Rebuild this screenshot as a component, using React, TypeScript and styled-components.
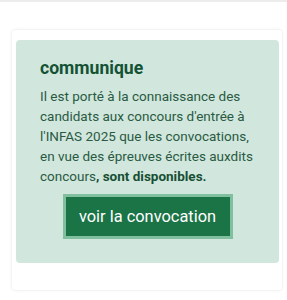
import React from "react";
import styled, { createGlobalStyle } from "styled-components";

const GlobalStyle = createGlobalStyle`
  html, body {
    margin: 0;
    padding: 0;
    background: #ffffff;
    font-family: Roboto, "Liberation Sans", Arial, sans-serif;
  }
  body {
    border-top: 2px solid #ececec;
  }
`;

const Page = styled.div`
  padding: 28px 5px 9px 12px;
`;

const Card = styled.div`
  width: 270px;
  box-sizing: border-box;
  padding: 10px 3px 27px 4px;
  background: #ffffff;
  border-radius: 3px;
  box-shadow: 0 0 3px rgba(0, 0, 0, 0.12);
`;

const Notice = styled.div`
  background: #d1e7dd;
  border-radius: 4px;
  padding: 17px 24px 24px 24px;
  display: flex;
  flex-direction: column;
`;

const Title = styled.h2`
  margin: 0 0 7px;
  font-size: 17.6px;
  line-height: 22px;
  font-weight: 700;
  color: #145235;
`;

const Text = styled.p`
  margin: 0;
  font-size: 13.5px;
  line-height: 20px;
  color: #2a5a43;
  strong {
    font-weight: 700;
    color: #174f34;
  }
`;

const Button = styled.button`
  align-self: center;
  margin: 8px 0 0 0;
  width: 170px;
  height: 45px;
  box-sizing: border-box;
  border: 3px solid #80c09e;
  background: #1b7446;
  color: #ffffff;
  font-family: inherit;
  font-size: 16.4px;
  cursor: pointer;
`;

export default function App() {
  return (
    <>
      <GlobalStyle />
      <Page>
        <Card>
          <Notice>
            <Title>communique</Title>
            <Text>
              Il est porté à la connaissance des candidats aux concours d'entrée à
              l'INFAS 2025 que les convocations, en vue des épreuves écrites auxdits
              concours<strong>, sont disponibles.</strong>
            </Text>
            <Button>voir la convocation</Button>
          </Notice>
        </Card>
      </Page>
    </>
  );
}
